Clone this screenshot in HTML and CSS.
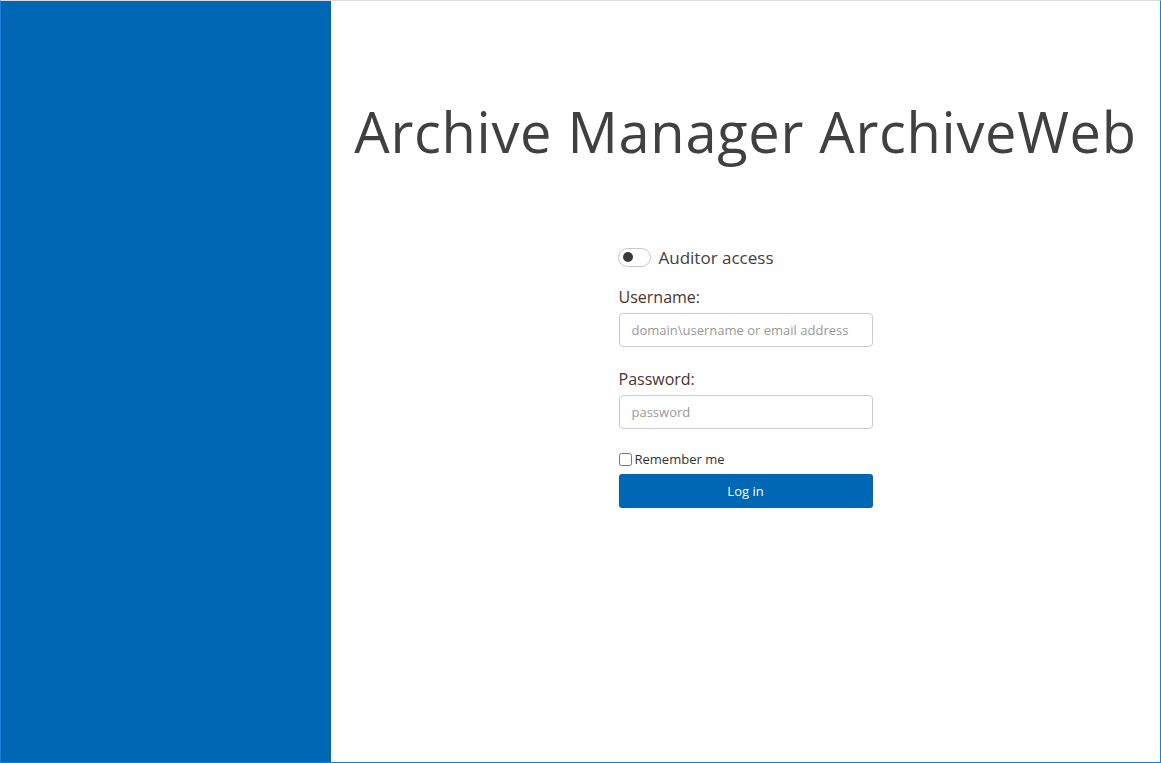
FILE: index.html
```html
<!DOCTYPE html>
<html lang="en">
<head>
<meta charset="utf-8">
<title>Archive Manager ArchiveWeb</title>
<link rel="stylesheet" href="styles.css">
</head>
<body>
<div class="frame">
  <aside class="side"></aside>
  <main class="main">
    <h1 class="title">Archive Manager ArchiveWeb</h1>
    <form class="login">
      <label class="toggle-row">
        <span class="toggle"><span class="knob"></span></span>
        <span class="toggle-text">Auditor access</span>
      </label>
      <label class="field-label" for="user">Username:</label>
      <input class="field" id="user" type="text" placeholder="domain\username or email address">
      <label class="field-label" for="pass">Password:</label>
      <input class="field" id="pass" type="password" placeholder="password">
      <label class="remember"><input type="checkbox" class="check"> Remember me</label>
      <button type="button" class="btn">Log in</button>
    </form>
  </main>
</div>
</body>
</html>
```
FILE: styles.css
```css
* { box-sizing: border-box; }
html, body { margin: 0; padding: 0; background: #fff; }
body { font-family: "Open Sans", "Noto Sans", sans-serif; color: #404040; }

.frame {
  display: flex;
  height: 763px;
  border: 1px solid #1a7fd6;
  border-top-color: #dcdcdc;
}
.side {
  width: 330px;
  flex: none;
  background: #0067b4;
}
.main {
  flex: 1;
  display: flex;
  flex-direction: column;
  align-items: center;
}
.title {
  margin: 94px 0 0;
  font-size: 56px;
  font-weight: 400;
  line-height: 72px;
  color: #404040;
  letter-spacing: 0.7px;
  white-space: nowrap;
}
.login {
  width: 254px;
  margin-top: 79px;
  display: flex;
  flex-direction: column;
}
.toggle-row {
  display: flex;
  align-items: center;
  gap: 8px;
  margin-left: -1px;
  height: 22px;
}
.toggle {
  width: 33px;
  height: 19px;
  border: 1px solid #c8c8c8;
  border-radius: 10px;
  display: flex;
  align-items: center;
  padding-left: 4px;
}
.knob {
  width: 10px;
  height: 10px;
  border-radius: 50%;
  background: #3a3a3a;
}
.toggle-text {
  font-size: 17px;
  color: #404040;
}
.field-label {
  font-size: 16px;
  color: #4a3530;
  margin-top: 18px;
  line-height: 22px;
}
.field {
  margin-top: 5px;
  height: 34px;
  width: 100%;
  border: 1px solid #cccccc;
  border-radius: 4px;
  padding: 0 12px;
  font-family: inherit;
  font-size: 13px;
  color: #555;
}
.field::placeholder { color: #999; }
.field + .field-label { margin-top: 21px; }
.remember {
  margin-top: 21px;
  display: flex;
  align-items: center;
  gap: 3px;
  font-size: 13px;
  color: #333;
  height: 18px;
}
.check {
  margin: 0;
  width: 13px;
  height: 13px;
}
.btn {
  margin-top: 6px;
  height: 34px;
  width: 100%;
  border: none;
  border-radius: 3px;
  background: #0067b4;
  color: #fff;
  font-family: inherit;
  font-size: 13px;
}
```
